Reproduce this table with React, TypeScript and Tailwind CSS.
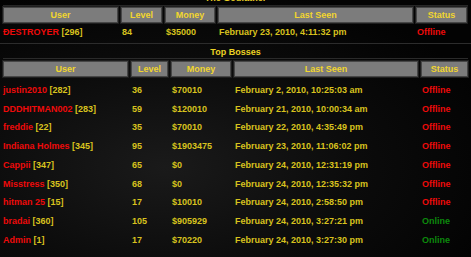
import React from 'react';

type Row = { name: string; id: number; level: number; money: string; seen: string; online: boolean };

const godfather: Row[] = [
  { name: 'ĐESTROYER', id: 296, level: 84, money: '$35000', seen: 'February 23, 2010, 4:11:32 pm', online: false },
];

const bosses: Row[] = [
  { name: 'justin2010', id: 282, level: 36, money: '$70010', seen: 'February 2, 2010, 10:25:03 am', online: false },
  { name: 'DDDHITMAN002', id: 283, level: 59, money: '$120010', seen: 'February 21, 2010, 10:00:34 am', online: false },
  { name: 'freddie', id: 22, level: 35, money: '$70010', seen: 'February 22, 2010, 4:35:49 pm', online: false },
  { name: 'Indiana Holmes', id: 345, level: 95, money: '$1903475', seen: 'February 23, 2010, 11:06:02 pm', online: false },
  { name: 'Cappii', id: 347, level: 65, money: '$0', seen: 'February 24, 2010, 12:31:19 pm', online: false },
  { name: 'Misstress', id: 350, level: 68, money: '$0', seen: 'February 24, 2010, 12:35:32 pm', online: false },
  { name: 'hitman 25', id: 15, level: 17, money: '$10010', seen: 'February 24, 2010, 2:58:50 pm', online: false },
  { name: 'bradai', id: 360, level: 105, money: '$905929', seen: 'February 24, 2010, 3:27:21 pm', online: true },
  { name: 'Admin', id: 1, level: 17, money: '$70220', seen: 'February 24, 2010, 3:27:30 pm', online: true },
];

const heads = ['User', 'Level', 'Money', 'Last Seen', 'Status'];

const HeadCell: React.FC<{ label: string }> = ({ label }) => (
  <div className="h-[16px] flex items-center justify-center bg-[#7c7c7c] border border-[#474747] shadow-[0_0_0_1px_#1e1e1e] text-[#f2d62e]">
    {label}
  </div>
);

const DataRow: React.FC<{ row: Row; height: string }> = ({ row, height }) => (
  <>
    <div className={`${height} flex items-center whitespace-nowrap`}>
      <span className="text-[#ee0a0a]">{row.name}</span>
      <span className="text-[#d8c21e]">&nbsp;[{row.id}]</span>
    </div>
    <div className={`${height} flex items-center pl-[1px] text-[#d8c21e]`}>{row.level}</div>
    <div className={`${height} flex items-center pl-[1px] text-[#d8c21e]`}>{row.money}</div>
    <div className={`${height} flex items-center pl-[1px] text-[#d8c21e] whitespace-nowrap`}>{row.seen}</div>
    <div className={`${height} flex items-center pl-[1px] ${row.online ? 'text-[#0c8a0c]' : 'text-[#ee0a0a]'}`}>
      {row.online ? 'Online' : 'Offline'}
    </div>
  </>
);

export default function App() {
  return (
    <div
      className="w-[471px] h-[257px] overflow-hidden bg-[#050505] bg-[radial-gradient(ellipse_at_35%_65%,#1a1a1a_0%,#0b0b0b_45%,#030303_80%)] text-[9px] font-bold leading-none"
      style={{ fontFamily: '"Liberation Sans", Arial, sans-serif' }}
    >
      <div className="-mt-[9px] px-[3px] pb-[1px] border-b border-[#2c2c2c]">
        <div className="h-[15px] flex items-center justify-center border-b border-[#262626] text-[#ecd224]">
          The Godfather
        </div>
        <div className="pt-[1px] grid grid-cols-[115px_41px_50px_195px_51px] gap-x-[3px]">
          {heads.map((h) => (
            <HeadCell key={h} label={h} />
          ))}
          {godfather.map((r) => (
            <DataRow key={r.id} row={r} height="h-[19px]" />
          ))}
        </div>
      </div>

      <div className="px-[3px]">
        <div className="h-[15px] pt-[2px] flex items-center justify-center border-b border-[#2a2a2a] text-[#ecd224]">
          Top Bosses
        </div>
        <div className="pt-[2px] grid grid-cols-[125px_37px_60px_184px_47px] gap-x-[3px]">
          {heads.map((h) => (
            <HeadCell key={h} label={h} />
          ))}
        </div>
        <div className="mt-[4px] grid grid-cols-[125px_37px_60px_184px_47px] gap-x-[3px]">
          {bosses.map((r) => (
            <DataRow key={r.id} row={r} height="h-[18.75px]" />
          ))}
        </div>
      </div>
    </div>
  );
}
